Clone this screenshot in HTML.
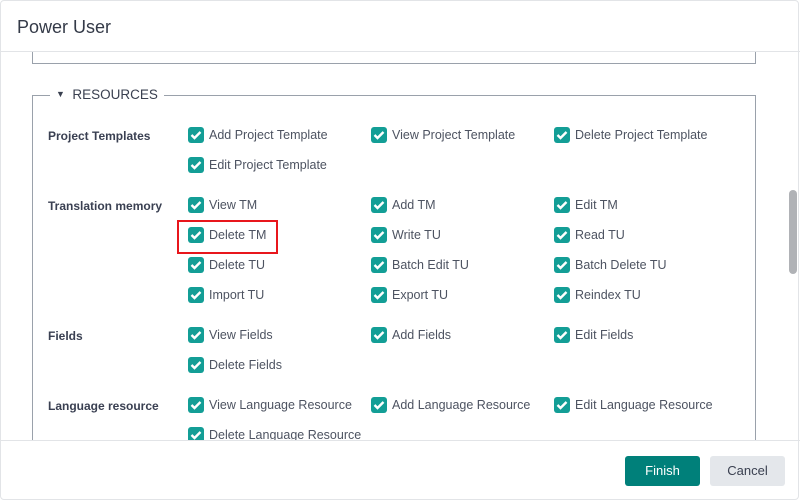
<!DOCTYPE html>
<html><head><meta charset="utf-8"><style>
html,body{margin:0;padding:0;width:800px;height:502px;overflow:hidden;background:#fff;font-family:"Liberation Sans",sans-serif;}
.dlg{position:absolute;left:0;top:0;width:799px;height:500px;border:1px solid #e2e4e7;border-radius:4px;box-sizing:border-box;}
.title{position:absolute;left:17px;top:17px;font-size:18px;color:#343a48;}
.hline{position:absolute;left:1px;right:0;height:1px;background:#e2e4e7;}
.fs{position:absolute;border:1px solid #9aa1ab;box-sizing:border-box;}
.clip{position:absolute;left:0;top:52px;width:785px;height:388px;overflow:hidden;}
.leg{position:absolute;left:50px;top:87px;background:#fff;padding:0 6px;font-size:13.5px;color:#3a4050;}
.lab{position:absolute;left:48px;font-size:12px;font-weight:bold;color:#3a4052;}
.it{position:absolute;font-size:12.5px;color:#4d5361;white-space:nowrap;}
.cb{position:absolute;width:16px;height:16px;background:#139e96;border-radius:3px;}
.cb svg{position:absolute;left:2px;top:3px;}
.sb{position:absolute;left:789px;top:190px;width:8px;height:84px;background:#b0b2b6;border-radius:4px;}
.btn{position:absolute;top:456px;height:30px;width:75px;border-radius:3px;font-size:13px;text-align:center;line-height:30px;}
</style></head><body>
<div class="dlg"></div>
<div class="title">Power User</div>
<div class="hline" style="top:51px"></div>
<div class="clip">
<div class="fs" style="left:32px;top:-20px;width:724px;height:32px"></div>
<div class="fs" style="left:32px;top:43px;width:724px;height:420px"></div>
</div>
<div class="leg"><span style="font-size:9px;position:relative;top:-2px">&#9660;</span>&nbsp;&nbsp;RESOURCES</div>
<div id="items" style="position:absolute;left:0;top:0;width:800px;height:440px;overflow:hidden"></div>
<div style="position:absolute;left:177px;top:220px;width:101px;height:34px;border:2px solid #e8161c;box-sizing:border-box"></div>
<div class="sb"></div>
<div class="hline" style="top:440px"></div>
<div class="btn" style="left:625px;background:#00807a;color:#fff">Finish</div>
<div class="btn" style="left:710px;background:#e4e7eb;color:#3a4050">Cancel</div>
<script>
var rows=[[135,"Project Templates",["Add Project Template","View Project Template","Delete Project Template"]],[165,"",["Edit Project Template"]],[205,"Translation memory",["View TM","Add TM","Edit TM"]],[235,"",["Delete TM","Write TU","Read TU"]],[265,"",["Delete TU","Batch Edit TU","Batch Delete TU"]],[295,"",["Import TU","Export TU","Reindex TU"]],[335,"Fields",["View Fields","Add Fields","Edit Fields"]],[365,"",["Delete Fields"]],[405,"Language resource",["View Language Resource","Add Language Resource","Edit Language Resource"]],[435,"",["Delete Language Resource"]]];
var xs=[188,371,554],h="";
rows.forEach(function(r){var y=r[0];if(r[1])h+='<div class="lab" style="top:'+(y-6)+'px">'+r[1]+'</div>';
r[2].forEach(function(t,i){h+='<div class="cb" style="left:'+xs[i]+'px;top:'+(y-8)+'px"><svg width="12" height="10" viewBox="0 0 12 10"><path d="M1.5 5 L4.5 8 L10.5 2" stroke="#fff" stroke-width="2.4" fill="none"/></svg></div><div class="it" style="left:'+(xs[i]+21)+'px;top:'+(y-7)+'px">'+t+'</div>';});});
document.getElementById("items").innerHTML=h;
</script>
</body></html>
